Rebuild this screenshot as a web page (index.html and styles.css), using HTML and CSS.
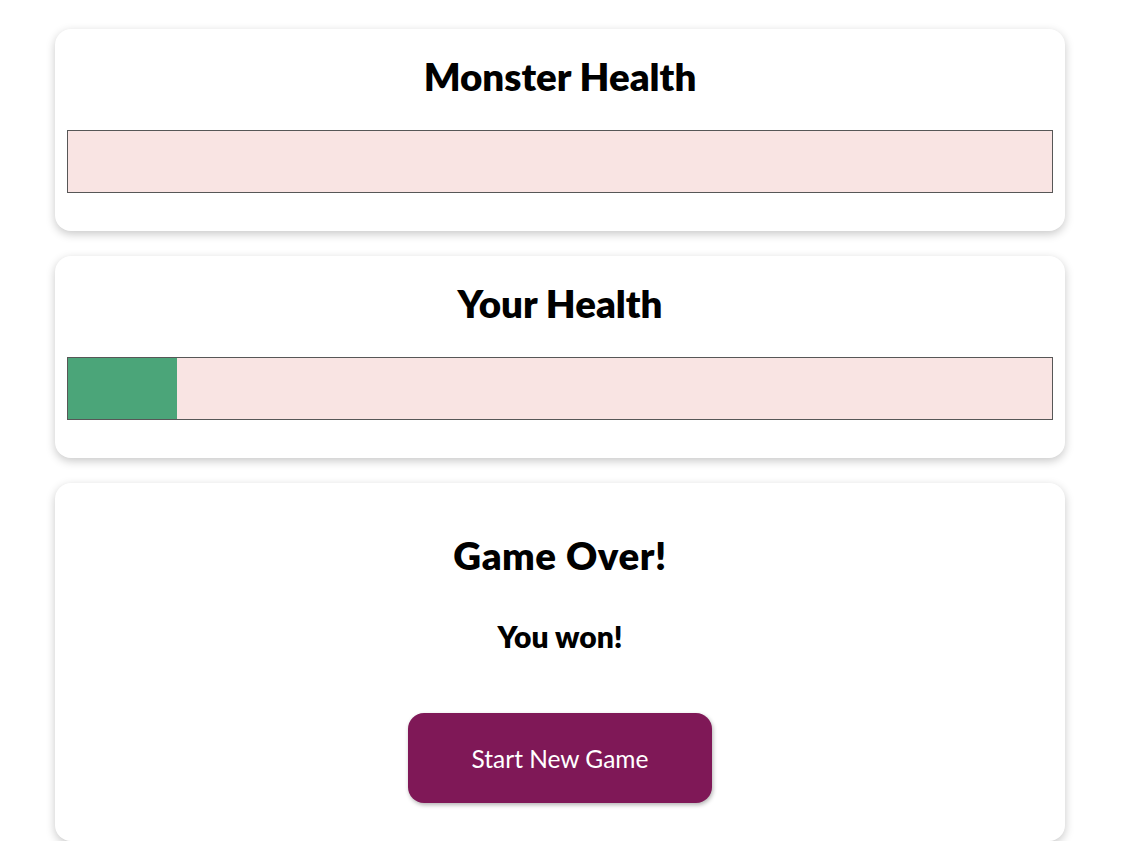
FILE: index.html
```html
<!DOCTYPE html>
<html lang="en">
<head>
<meta charset="utf-8">
<title>Monster Slayer</title>
<link rel="stylesheet" href="styles.css">
</head>
<body>
<main class="page">
  <section class="card">
    <h2 class="card-title">Monster Health</h2>
    <div class="healthbar"><div class="healthbar-value" style="width: 0%"></div></div>
  </section>
  <section class="card">
    <h2 class="card-title">Your Health</h2>
    <div class="healthbar"><div class="healthbar-value" style="width: 11.1%"></div></div>
  </section>
  <section class="card card-over">
    <h2 class="card-title over-title">Game Over!</h2>
    <h3 class="result">You won!</h3>
    <button class="btn" type="button">Start New Game</button>
  </section>
</main>
</body>
</html>
```

FILE: styles.css
```css
* { box-sizing: border-box; }
html, body { margin: 0; padding: 0; background: #fff; }
body { font-family: "Lato", "Noto Sans", sans-serif; color: #000; }
.page {
  width: 1010px;
  margin-left: 55px;
  padding-top: 29px;
  display: flex;
  flex-direction: column;
  gap: 25px;
}
.card {
  background: #fff;
  border-radius: 16px;
  box-shadow: 0 3px 10px rgba(0,0,0,0.22);
  padding: 21px 12px 38px;
  display: flex;
  flex-direction: column;
  align-items: stretch;
  text-align: center;
}
.card-title {
  margin: 0;
  font-size: 38.5px;
  line-height: 52px;
  font-weight: 800;
}
.healthbar {
  margin-top: 28px;
  height: 63px;
  border: 1px solid #575757;
  background: #f9e4e3;
}
.healthbar-value {
  height: 100%;
  background: #4ba579;
}
.card-over { align-items: center; }
.over-title { margin-top: 25px; letter-spacing: 0.5px; }
.result {
  margin: 35px 0 0;
  font-size: 30px;
  line-height: 40px;
  font-weight: 800;
}
.btn {
  margin-top: 57px;
  width: 304px;
  height: 90px;
  border: none;
  border-radius: 16px;
  background: #7f1857;
  color: #fff;
  font-family: inherit;
  font-size: 24.5px;
  box-shadow: 1px 2px 4px rgba(0,0,0,0.3);
}
```
